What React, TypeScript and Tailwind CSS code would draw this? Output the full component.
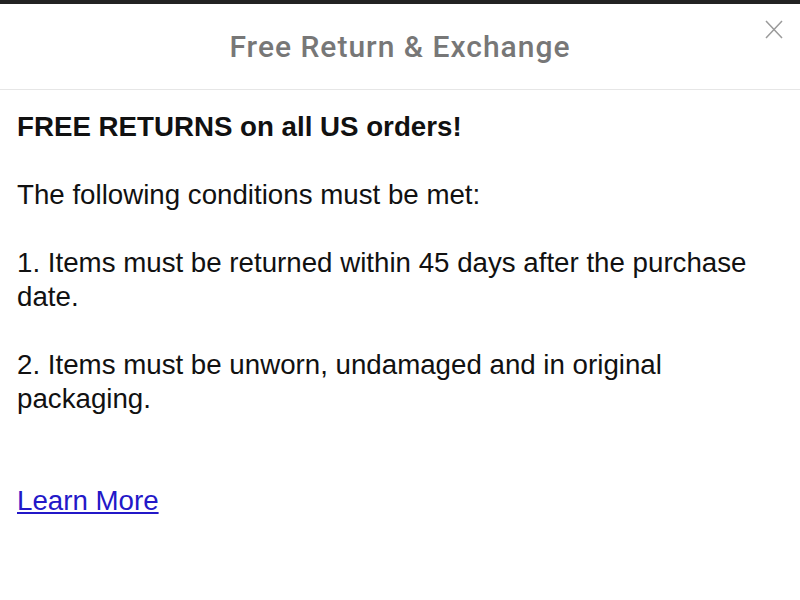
import React from "react";

export default function App() {
  return (
    <div className="w-[800px] h-[600px] bg-white overflow-hidden relative" style={{ fontFamily: '"Liberation Sans", Arial, sans-serif' }}>
      <div className="h-[4px] bg-[#222222]" />
      <div className="h-[86px] border-b border-[#e6e6e6] flex items-center justify-center relative">
        <div className="text-[30px] font-medium text-[#777777] tracking-[1px]" style={{ fontFamily: 'Roboto, "Liberation Sans", sans-serif' }}>
          Free Return &amp; Exchange
        </div>
        <button className="absolute right-[17px] top-[16px] w-[18px] h-[19px]">
          <svg width="18" height="19" viewBox="0 0 18 19">
            <path d="M1 1 L17 18 M17 1 L1 18" stroke="#9a9a9a" strokeWidth="1.5" fill="none" />
          </svg>
        </button>
      </div>
      <div className="px-[17px] pt-[20px] text-[27.7px] leading-[34px] text-[#111111]">
        <div className="font-bold">FREE RETURNS on all US orders!</div>
        <br />
        <div>The following conditions must be met:</div>
        <br />
        <div>1. Items must be returned within 45 days after the purchase date.</div>
        <br />
        <div>2. Items must be unworn, undamaged and in original packaging.</div>
        <br />
        <br />
        <a href="#" className="text-[#2318c8] underline">Learn More</a>
      </div>
    </div>
  );
}
